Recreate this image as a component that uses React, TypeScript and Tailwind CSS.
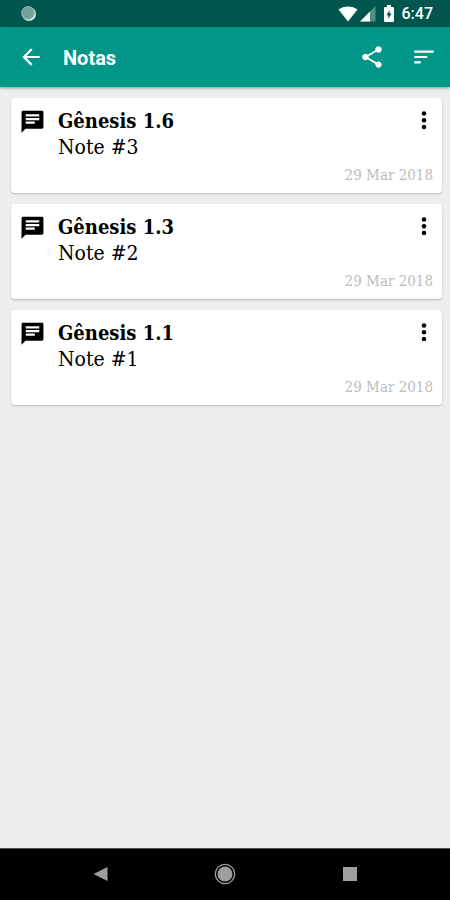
import React from "react";

type Note = { verse: string; text: string; date: string };

const notes: Note[] = [
  { verse: "Gênesis 1.6", text: "Note #3", date: "29 Mar 2018" },
  { verse: "Gênesis 1.3", text: "Note #2", date: "29 Mar 2018" },
  { verse: "Gênesis 1.1", text: "Note #1", date: "29 Mar 2018" },
];

function StatusBar() {
  return (
    <div className="flex h-[27px] items-center bg-[#00564d] pl-5 pr-[17px] text-white">
      <svg className="h-4 w-4" viewBox="0 0 16 16" aria-hidden="true">
        <circle cx="9" cy="8" r="7" fill="#d5e5e2" />
        <circle cx="8" cy="7" r="6.4" fill="#70a29b" stroke="#a5c5c1" strokeWidth="0.8" />
      </svg>
      <div className="ml-auto flex items-center">
        <svg className="h-4 w-5" viewBox="0 0 20 16" fill="currentColor" aria-hidden="true">
          <path d="M0.5 3.500C6 -0.5 14 -0.5 19.5 3.500L10 15.500Z" />
        </svg>
        <svg className="ml-0.5 h-4 w-4" viewBox="0 0 16 16" fill="currentColor" aria-hidden="true">
          <path d="M0 15.500L15.500 0V15.500Z" fillOpacity="0.32" />
          <path d="M0 15.500L10 5.500V15.500Z" />
        </svg>
        <svg className="ml-2 h-[17px] w-[10px]" viewBox="0 0 10 17" aria-hidden="true">
          <path fill="#fff" d="M3 0h4v2h2.200l.8.8v13.400l-.8.8H.8l-.8-.8V2.800L.8 2H3z" />
          <path fill="#00564d" d="M5.600 5V8.500H7.500L4.400 14V10.200H2.500z" />
        </svg>
        <span className="ml-2 text-base leading-5 font-medium">6:47</span>
      </div>
    </div>
  );
}

function Toolbar() {
  return (
    <header className="relative flex h-[60px] items-center bg-[#009688] pl-[18px] pr-[13px] text-white shadow-[0_1px_3px_rgba(0,0,0,0.4)]">
      <button type="button" aria-label="Voltar">
        <svg className="h-[26px] w-[26px]" viewBox="0 0 24 24" fill="currentColor">
          <path d="M20 11H7.830l5.590-5.590L12 4l-8 8 8 8 1.410-1.410L7.830 13H20v-2z" />
        </svg>
      </button>
      <h1 className="ml-[19px] pt-0.5 text-xl font-bold">Notas</h1>
      <button type="button" aria-label="Compartilhar" className="ml-auto">
        <svg className="h-[26px] w-[26px]" viewBox="0 0 24 24" fill="currentColor">
          <path d="M18 16.080c-.76 0-1.440.3-1.960.77L8.910 12.700c.05-.23.09-.46.09-.7s-.04-.47-.09-.7l7.050-4.110c.54.5 1.250.81 2.040.81 1.660 0 3-1.340 3-3s-1.340-3-3-3-3 1.340-3 3c0 .24.04.47.09.7L8.040 9.810C7.500 9.310 6.790 9 6 9c-1.660 0-3 1.340-3 3s1.340 3 3 3c.79 0 1.500-.31 2.040-.81l7.120 4.160c-.05.21-.08.43-.08.65 0 1.610 1.310 2.920 2.920 2.920s2.920-1.310 2.920-2.920-1.310-2.920-2.920-2.920z" />
        </svg>
      </button>
      <button type="button" aria-label="Ordenar" className="ml-[26px]">
        <svg className="h-[26px] w-[26px]" viewBox="0 0 24 24" fill="currentColor">
          <path d="M3 18h6v-2H3v2zM3 6v2h18V6H3zm0 7h12v-2H3v2z" />
        </svg>
      </button>
    </header>
  );
}

function NoteCard({ note }: { note: Note }) {
  return (
    <li className="flex items-start rounded-sm bg-white pt-2.5 pr-[9px] pb-2 pl-2 text-black shadow-[0_1px_2px_rgba(0,0,0,0.22)]">
      <svg className="h-[27px] w-[27px] shrink-0" viewBox="0 0 24 24" fill="currentColor" aria-hidden="true">
        <path d="M3.500 2.500c-.7 0-1.200.5-1.200 1.200L2.200 22l3.600-3.600h14.700c.7 0 1.200-.5 1.200-1.200V3.700c0-.7-.5-1.200-1.200-1.200h-17zM6 8.800h12v2H6v-2zm8 5.200H6v-2h8v2zm4-6.400H6v-2h12v2z" />
      </svg>
      <div className="ml-3 flex min-w-0 flex-1 flex-col font-['DejaVu_Serif_Condensed','DejaVu_Serif',serif]">
        <div className="flex items-start justify-between">
          <div>
            <h2 className="text-xl leading-[26px] font-bold">{note.verse}</h2>
            <p className="text-[21px] leading-[26px]">{note.text}</p>
          </div>
          <button type="button" aria-label={`Opções de ${note.verse}`} className="-mr-1">
            <svg className="h-[26px] w-[26px]" viewBox="0 0 24 24" fill="currentColor">
              <circle cx="12" cy="5" r="2.100" />
              <circle cx="12" cy="11.300" r="2.100" />
              <circle cx="12" cy="17.600" r="2.100" />
            </svg>
          </button>
        </div>
        <time dateTime="2018-03-29" className="mt-[5px] text-right text-[15px] leading-5 text-[#bdbdbd]">
          {note.date}
        </time>
      </div>
    </li>
  );
}

function NavigationBar() {
  return (
    <nav className="flex h-[52px] items-center justify-between border-t border-[#555] bg-black px-[88px] pb-0.5 text-[#9e9e9e]">
      <button type="button" aria-label="Voltar ao anterior">
        <svg className="h-6 w-6" viewBox="0 0 24 24" fill="currentColor">
          <path d="M5.500 12L19.500 5V19Z" />
        </svg>
      </button>
      <button type="button" aria-label="Início">
        <svg className="h-6 w-6" viewBox="0 0 24 24" fill="currentColor">
          <circle cx="12" cy="12" r="7.500" />
          <circle cx="12" cy="12" r="9.700" fill="none" stroke="currentColor" strokeWidth="1.300" />
        </svg>
      </button>
      <button type="button" aria-label="Recentes">
        <svg className="h-6 w-6" viewBox="0 0 24 24" fill="currentColor">
          <path d="M5 5h14v14H5z" />
        </svg>
      </button>
    </nav>
  );
}

export default function App() {
  return (
    <div className="flex min-h-screen flex-col bg-[#eeeeee] font-[Roboto,sans-serif]">
      <StatusBar />
      <Toolbar />
      <main className="flex-1 pt-[11px] pr-2 pl-[11px]">
        <ul className="flex flex-col gap-[11px]">
          {notes.map((note) => (
            <NoteCard key={note.verse} note={note} />
          ))}
        </ul>
      </main>
      <NavigationBar />
    </div>
  );
}
